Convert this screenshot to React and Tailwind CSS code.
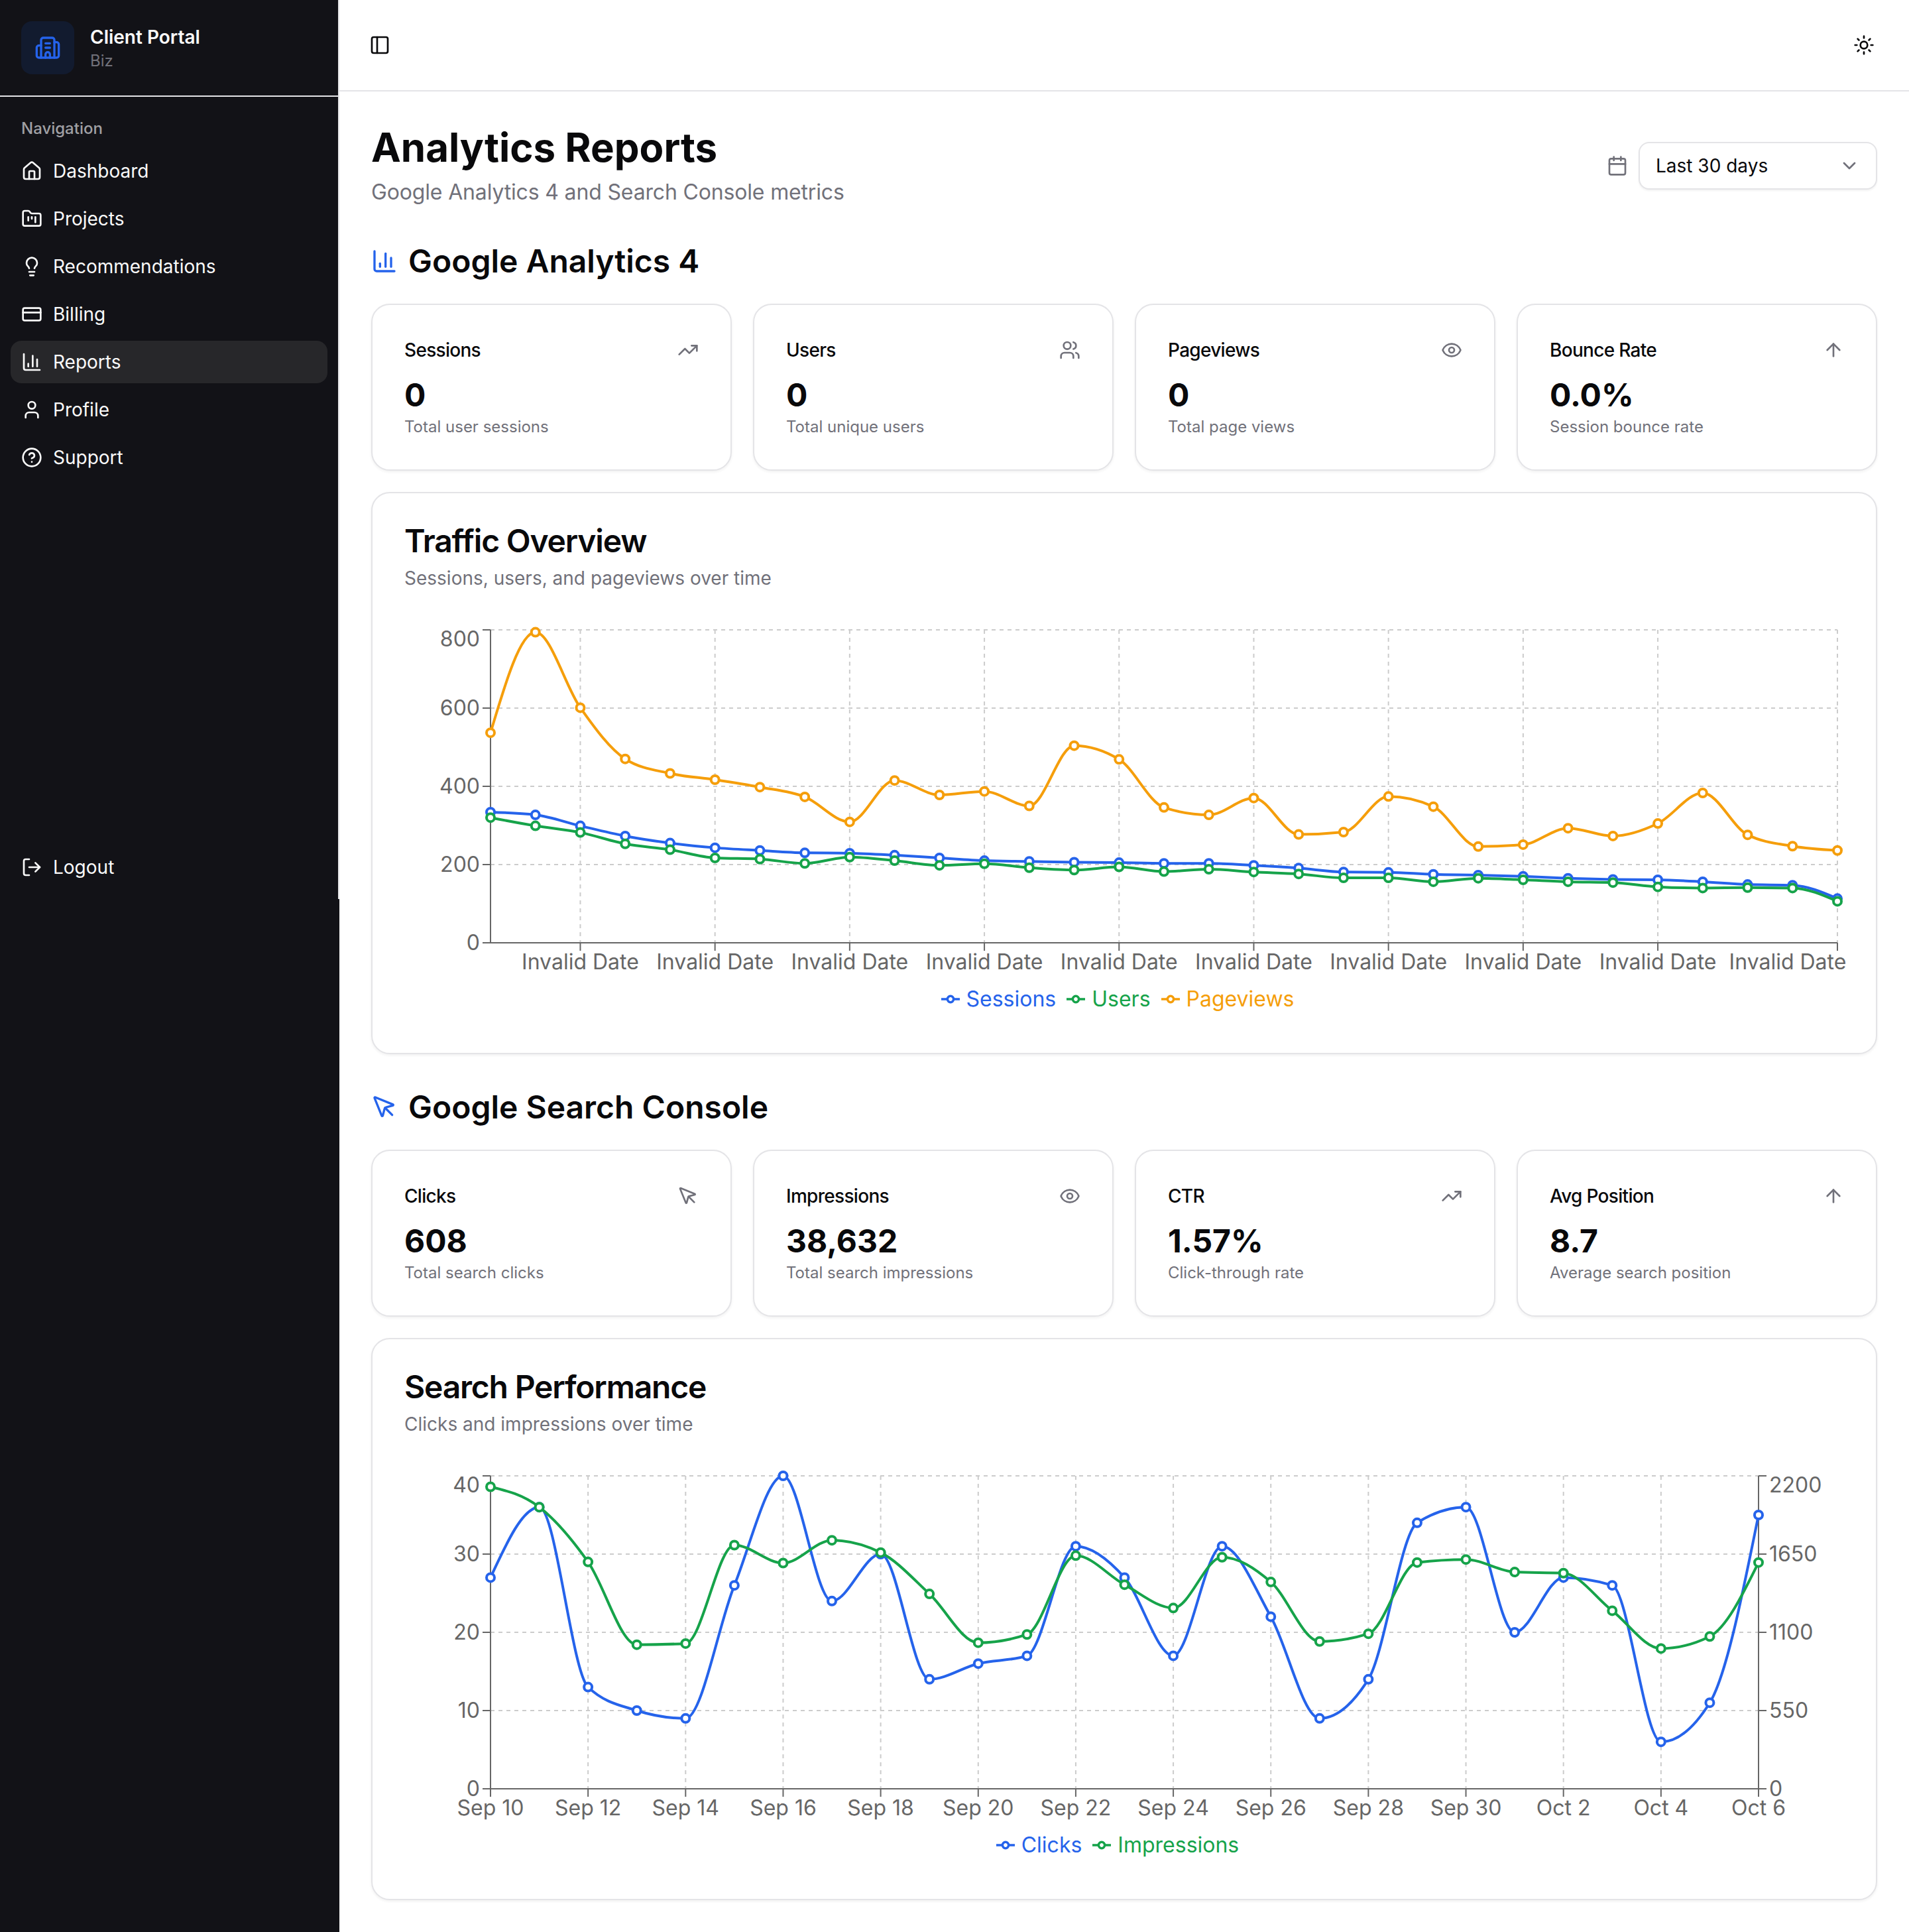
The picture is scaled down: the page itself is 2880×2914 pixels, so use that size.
import {
  ArrowUp,
  Building2,
  Calendar,
  ChartColumn,
  ChevronDown,
  CircleHelp,
  CreditCard,
  Eye,
  FolderKanban,
  House,
  Lightbulb,
  LogOut,
  MousePointer,
  PanelLeft,
  Sun,
  TrendingUp,
  User,
  Users,
} from 'lucide-react';

const BLUE = '#2563eb';
const GREEN = '#16a34a';
const ORANGE = '#f59e0b';

const navItems = [
  { label: 'Dashboard', icon: House },
  { label: 'Projects', icon: FolderKanban },
  { label: 'Recommendations', icon: Lightbulb },
  { label: 'Billing', icon: CreditCard },
  { label: 'Reports', icon: ChartColumn, active: true },
  { label: 'Profile', icon: User },
  { label: 'Support', icon: CircleHelp },
];

const gaStats = [
  { title: 'Sessions', value: '0', note: 'Total user sessions', icon: TrendingUp },
  { title: 'Users', value: '0', note: 'Total unique users', icon: Users },
  { title: 'Pageviews', value: '0', note: 'Total page views', icon: Eye },
  { title: 'Bounce Rate', value: '0.0%', note: 'Session bounce rate', icon: ArrowUp },
];

const gscStats = [
  { title: 'Clicks', value: '608', note: 'Total search clicks', icon: MousePointer },
  { title: 'Impressions', value: '38,632', note: 'Total search impressions', icon: Eye },
  { title: 'CTR', value: '1.57%', note: 'Click-through rate', icon: TrendingUp },
  { title: 'Avg Position', value: '8.7', note: 'Average search position', icon: ArrowUp },
];

const sessions = [334, 327, 299, 273, 255, 243, 236, 230, 229, 224, 217, 210, 208, 206, 205, 203, 203, 198, 191, 181, 180, 175, 173, 170, 165, 162, 161, 156, 149, 147, 113];
const users = [320, 299, 282, 253, 238, 217, 214, 203, 219, 210, 198, 202, 192, 186, 194, 182, 188, 181, 176, 166, 166, 156, 165, 161, 156, 154, 143, 140, 141, 140, 106];
const pageviews = [537, 794, 601, 470, 433, 417, 398, 373, 309, 415, 378, 387, 350, 504, 469, 346, 327, 370, 277, 283, 374, 348, 246, 251, 293, 273, 305, 383, 276, 247, 236];
const clicks = [27, 36, 13, 10, 9, 26, 40, 24, 30, 14, 16, 17, 31, 27, 17, 31, 22, 9, 14, 34, 36, 20, 27, 26, 6, 11, 35];
const impressions = [2123, 1980, 1595, 1013, 1021, 1713, 1587, 1747, 1661, 1370, 1027, 1085, 1639, 1435, 1271, 1628, 1454, 1036, 1090, 1591, 1612, 1524, 1516, 1252, 986, 1071, 1591];

const searchDates = ['Sep 10', 'Sep 12', 'Sep 14', 'Sep 16', 'Sep 18', 'Sep 20', 'Sep 22', 'Sep 24', 'Sep 26', 'Sep 28', 'Sep 30', 'Oct 2', 'Oct 4', 'Oct 6'];

// same maths as d3 curveMonotoneX, that's what the chart lib draws
function monotonePath(points) {
  const n = points.length;
  const sign = (v) => (v < 0 ? -1 : 1);
  const tangents = new Array(n).fill(0);
  for (let i = 1; i < n - 1; i++) {
    const [x0, y0] = points[i - 1];
    const [x1, y1] = points[i];
    const [x2, y2] = points[i + 1];
    const h0 = x1 - x0;
    const h1 = x2 - x1;
    const s0 = (y1 - y0) / h0;
    const s1 = (y2 - y1) / h1;
    const p = (s0 * h1 + s1 * h0) / (h0 + h1);
    tangents[i] = (sign(s0) + sign(s1)) * Math.min(Math.abs(s0), Math.abs(s1), 0.5 * Math.abs(p)) || 0;
  }
  const firstH = points[1][0] - points[0][0];
  const lastH = points[n - 1][0] - points[n - 2][0];
  tangents[0] = ((3 * (points[1][1] - points[0][1])) / firstH - tangents[1]) / 2;
  tangents[n - 1] = ((3 * (points[n - 1][1] - points[n - 2][1])) / lastH - tangents[n - 2]) / 2;

  let d = `M${points[0][0]},${points[0][1]}`;
  for (let i = 1; i < n; i++) {
    const [x0, y0] = points[i - 1];
    const [x1, y1] = points[i];
    const dx = (x1 - x0) / 3;
    d += `C${x0 + dx},${y0 + dx * tangents[i - 1]},${x1 - dx},${y1 - dx * tangents[i]},${x1},${y1}`;
  }
  return d;
}

const TOP = 10;
const BOTTOM = 482;
const LEFT = 130;

function Series({ data, color, right, max }) {
  const step = (right - LEFT) / (data.length - 1);
  const points = data.map((v, i) => [LEFT + i * step, BOTTOM - (v / max) * (BOTTOM - TOP)]);
  return (
    <g>
      <path d={monotonePath(points)} fill="none" stroke={color} strokeWidth="4" />
      {points.map(([x, y], i) => (
        <circle key={i} cx={x} cy={y} r="6" fill="#fff" stroke={color} strokeWidth="4" />
      ))}
    </g>
  );
}

function YAxis({ x, labels, side }) {
  const dir = side === 'left' ? -1 : 1;
  return (
    <g>
      <line x1={x} x2={x} y1={TOP} y2={BOTTOM} stroke="#666" strokeWidth="2" />
      {labels.map((label, i) => {
        const y = BOTTOM - (i * (BOTTOM - TOP)) / (labels.length - 1);
        const isTop = i === labels.length - 1;
        return (
          <g key={label}>
            <line x1={x} x2={x + dir * 12} y1={y} y2={y} stroke="#666" strokeWidth="2" />
            <text x={x + dir * 16} y={y + 11 + (isTop ? 14 : 0)} textAnchor={side === 'left' ? 'end' : 'start'} fill="#666" fontSize="32">
              {label}
            </text>
          </g>
        );
      })}
    </g>
  );
}

function Chart({ right, yLabels, rightLabels, xTicks, children }) {
  const rows = yLabels.length - 1;
  return (
    <svg width="2172" height="545" viewBox="0 0 2172 545" className="block overflow-visible">
      {yLabels.map((_, i) => {
        const y = TOP + (i * (BOTTOM - TOP)) / rows;
        return <line key={i} x1={LEFT} x2={right} y1={y} y2={y} stroke="#ccc" strokeWidth="2" strokeDasharray="6 6" />;
      })}
      {xTicks.map((t) => (
        <line key={t.x} x1={t.x} x2={t.x} y1={TOP} y2={BOTTOM} stroke="#ccc" strokeWidth="2" strokeDasharray="6 6" />
      ))}
      <line x1={LEFT} x2={right} y1={BOTTOM} y2={BOTTOM} stroke="#666" strokeWidth="2" />
      {xTicks.map((t) => (
        <g key={t.x}>
          <line x1={t.x} x2={t.x} y1={BOTTOM} y2={BOTTOM + 12} stroke="#666" strokeWidth="2" />
          <text x={t.textX ?? t.x} y={BOTTOM + 40} textAnchor="middle" fill="#666" fontSize="32">
            {t.label}
          </text>
        </g>
      ))}
      <YAxis x={LEFT} labels={yLabels} side="left" />
      {rightLabels && <YAxis x={right} labels={rightLabels} side="right" />}
      {children}
    </svg>
  );
}

function LegendItem({ color, label }) {
  return (
    <div className="flex items-center gap-2.5" style={{ color }}>
      <svg width="28" height="28" viewBox="0 0 32 32" fill="none" stroke={color} strokeWidth="4">
        <path d="M0,16h10.67A5.33,5.33,0,1,1,21.33,16H32M21.33,16A5.33,5.33,0,1,1,10.67,16" />
      </svg>
      <span>{label}</span>
    </div>
  );
}

function Legend({ items }) {
  return (
    <div className="flex h-[44px] items-center justify-center gap-4 pr-5 text-[32px] leading-[44px]">
      {items.map((item) => (
        <LegendItem key={item.label} {...item} />
      ))}
    </div>
  );
}

function StatCard({ stat }) {
  const Icon = stat.icon;
  return (
    <div className="rounded-[28px] border-2 border-[#e4e4e7] bg-white px-12 py-12 shadow-[0_2px_4px_rgba(0,0,0,0.06)]">
      <div className="flex h-10 items-center justify-between">
        <span className="text-[28px] leading-10 font-medium tracking-tight text-[#09090b]">{stat.title}</span>
        <Icon className="h-8 w-8 text-[#71717a]" />
      </div>
      <div className="mt-4 text-[48px] leading-[64px] font-bold text-[#09090b]">{stat.value}</div>
      <div className="text-2xl leading-8 text-[#71717a]">{stat.note}</div>
    </div>
  );
}

function ChartCard({ title, subtitle, children }) {
  return (
    <div className="mt-8 h-[848px] rounded-[28px] border-2 border-[#e4e4e7] bg-white p-12 shadow-[0_2px_4px_rgba(0,0,0,0.06)]">
      <h3 className="text-[48px] leading-[48px] font-semibold tracking-tight text-[#09090b]">{title}</h3>
      <p className="mt-3 text-[28px] leading-10 text-[#71717a]">{subtitle}</p>
      <div className="mt-12">{children}</div>
    </div>
  );
}

function SectionTitle({ icon: Icon, children }) {
  return (
    <h2 className="mb-8 flex h-16 items-center gap-4 text-[48px] leading-[64px] font-semibold text-[#09090b]">
      <Icon className="h-10 w-10 text-[#2563eb]" />
      {children}
    </h2>
  );
}

function Sidebar() {
  return (
    <aside className="w-[512px] shrink-0 bg-[#121217]">
      <div className="flex h-[1356px] flex-col border-r-2 border-[#e4e4e7] text-[28px] text-[#fafafa]">
        <div className="flex h-[146px] items-center gap-6 border-b-2 border-[#e4e4e7] pl-8">
          <div className="flex h-20 w-20 items-center justify-center rounded-2xl bg-[#121b2f]">
            <Building2 className="h-10 w-10 text-[#2563eb]" />
          </div>
          <div>
            <div className="text-[28px] leading-10 font-semibold">Client Portal</div>
            <div className="text-2xl leading-8 text-[#71717a]">Biz</div>
          </div>
        </div>
        <div className="flex-1 px-4 pt-4">
          <div className="flex h-16 items-center px-4 text-2xl font-medium text-[#a0a0a4]">Navigation</div>
          <nav className="flex flex-col gap-2">
            {navItems.map((item) => {
              const Icon = item.icon;
              return (
                <a
                  key={item.label}
                  className={`flex h-16 items-center gap-4 rounded-2xl px-4 ${item.active ? 'bg-[#27272a]' : ''}`}
                >
                  <Icon className="h-8 w-8" />
                  {item.label}
                </a>
              );
            })}
          </nav>
        </div>
        <div className="px-4 pb-4">
          <a className="flex h-16 items-center gap-4 px-4">
            <LogOut className="h-8 w-8" />
            Logout
          </a>
        </div>
      </div>
    </aside>
  );
}

export default function App() {
  const trafficRight = 2162;
  const trafficStep = (trafficRight - LEFT) / 30;
  const trafficTicks = [2, 5, 8, 11, 14, 17, 20, 23, 26, 30].map((i) => ({
    x: LEFT + i * trafficStep,
    textX: i === 30 ? trafficRight - 75 : undefined,
    label: 'Invalid Date',
  }));

  const searchRight = 2043;
  const searchTicks = searchDates.map((label, i) => ({
    x: LEFT + (i * (searchRight - LEFT)) / 13,
    label,
  }));

  return (
    <div className="flex min-h-[2914px] bg-white font-[family-name:Inter,sans-serif]">
      <Sidebar />
      <main className="min-w-0 flex-1">
        <header className="flex h-[138px] items-center justify-between border-b-2 border-[#e4e4e7] pr-[52px] pl-[45px] text-[#09090b]">
          <PanelLeft className="h-8 w-8" />
          <Sun className="h-8 w-8" />
        </header>

        <div className="p-12">
          <div className="mb-12 flex items-start justify-between">
            <div>
              <h1 className="text-[60px] leading-[72px] font-bold text-[#09090b]">Analytics Reports</h1>
              <p className="mt-2 text-[32px] leading-[48px] tracking-[-0.16px] text-[#71717a]">Google Analytics 4 and Search Console metrics</p>
            </div>
            <div className="mt-7 flex items-center gap-4">
              <Calendar className="h-8 w-8 text-[#71717a]" />
              <div className="flex h-[72px] w-[360px] items-center justify-between rounded-2xl border-2 border-[#e4e4e7] bg-white pr-6 pl-6 text-[28px] text-[#09090b] shadow-[0_2px_3px_rgba(0,0,0,0.05)]">
                Last 30 days
                <ChevronDown className="h-8 w-8 text-[#71717a]" />
              </div>
            </div>
          </div>

          <SectionTitle icon={ChartColumn}>Google Analytics 4</SectionTitle>
          <div className="grid grid-cols-4 gap-8">
            {gaStats.map((stat) => (
              <StatCard key={stat.title} stat={stat} />
            ))}
          </div>
          <ChartCard title="Traffic Overview" subtitle="Sessions, users, and pageviews over time">
            <Chart right={trafficRight} yLabels={['0', '200', '400', '600', '800']} xTicks={trafficTicks}>
              <Series data={sessions} color={BLUE} right={trafficRight} max={800} />
              <Series data={users} color={GREEN} right={trafficRight} max={800} />
              <Series data={pageviews} color={ORANGE} right={trafficRight} max={800} />
            </Chart>
            <Legend
              items={[
                { color: BLUE, label: 'Sessions' },
                { color: GREEN, label: 'Users' },
                { color: ORANGE, label: 'Pageviews' },
              ]}
            />
          </ChartCard>

          <div className="mt-12">
            <SectionTitle icon={MousePointer}>Google Search Console</SectionTitle>
          </div>
          <div className="grid grid-cols-4 gap-8">
            {gscStats.map((stat) => (
              <StatCard key={stat.title} stat={stat} />
            ))}
          </div>
          <ChartCard title="Search Performance" subtitle="Clicks and impressions over time">
            <Chart
              right={searchRight}
              yLabels={['0', '10', '20', '30', '40']}
              rightLabels={['0', '550', '1100', '1650', '2200']}
              xTicks={searchTicks}
            >
              <Series data={clicks} color={BLUE} right={searchRight} max={40} />
              <Series data={impressions} color={GREEN} right={searchRight} max={2200} />
            </Chart>
            <Legend
              items={[
                { color: BLUE, label: 'Clicks' },
                { color: GREEN, label: 'Impressions' },
              ]}
            />
          </ChartCard>
        </div>
      </main>
    </div>
  );
}
